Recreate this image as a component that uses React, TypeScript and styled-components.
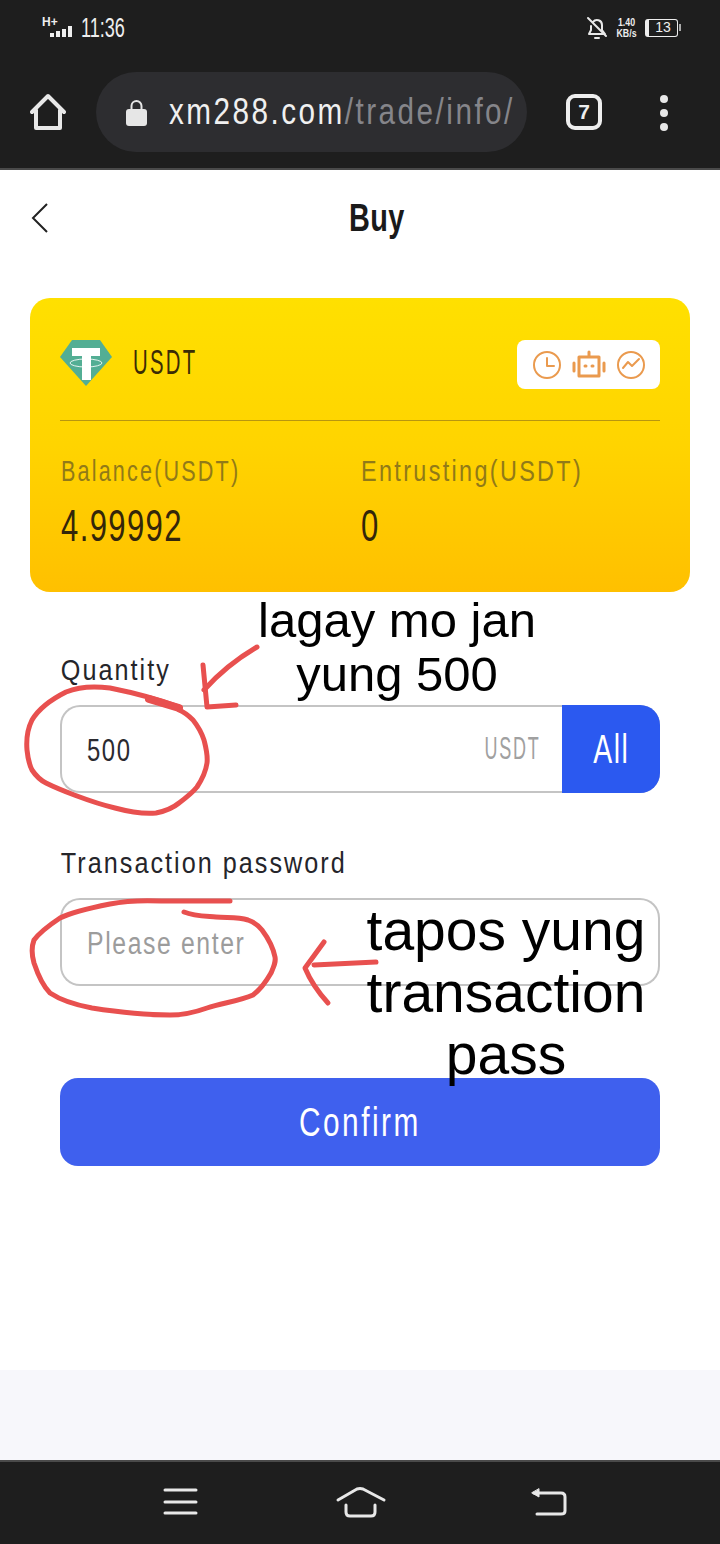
import React from "react";
import styled, { createGlobalStyle, css } from "styled-components";

const Global = createGlobalStyle`
  html, body { margin: 0; padding: 0; background: #fff; }
  #root { width: 720px; height: 1544px; overflow: hidden; }
  * { box-sizing: border-box; }
`;

const squeeze = (x: number, origin = "left") => css`
  display: inline-block;
  white-space: nowrap;
  transform: scaleX(${x});
  transform-origin: ${origin} center;
`;

const Screen = styled.div`
  position: relative;
  width: 720px;
  height: 1544px;
  display: flex;
  flex-direction: column;
  font-family: "Liberation Sans", Arial, sans-serif;
  background: #fff;
  overflow: hidden;
`;
const Chrome = styled.header`
  height: 170px;
  background: #1e1e1e;
  border-bottom: 2px solid #4a4a4a;
  display: flex;
  flex-direction: column;
`;
const StatusBar = styled.div`
  height: 56px;
  padding: 14px 42px 0 41px;
  display: flex;
  justify-content: space-between;
  align-items: flex-start;
`;
const StatusGroup = styled.div`
  display: flex;
  align-items: center;
  gap: 6px;
  height: 28px;
`;
const Clock = styled.span`
  color: #eee;
  font-size: 27px;
  ${squeeze(0.67)}
`;
const Speed = styled.span`
  display: flex;
  flex-direction: column;
  align-items: center;
  color: #eee;
  font-size: 11px;
  line-height: 11px;
  font-weight: 700;
  transform: scaleX(0.8);
`;
const Battery = styled.span`
  width: 33px;
  height: 18px;
  border: 1.5px solid #eee;
  border-left-width: 4px;
  border-radius: 3px;
  color: #eee;
  font-size: 14px;
  line-height: 15px;
  text-align: center;
  position: relative;
  &::after {
    content: "";
    position: absolute;
    right: -4px;
    top: 4px;
    width: 2px;
    height: 7px;
    background: #aaa;
  }
`;
const Toolbar = styled.div`
  height: 112px;
  padding: 16px 0 16px 30px;
  display: flex;
  align-items: flex-start;
`;
const HomeSlot = styled.div`
  width: 36px;
  height: 80px;
  display: flex;
  align-items: center;
`;
const UrlPill = styled.div`
  width: 431px;
  height: 80px;
  margin-left: 30px;
  border-radius: 40px;
  background: #2d2d30;
  display: flex;
  align-items: center;
  padding-left: 30px;
  gap: 22px;
  overflow: hidden;
  & > svg {
    flex-shrink: 0;
  }
`;
const Url = styled.span`
  font-size: 36px;
  letter-spacing: 3px;
  color: #f0f0f0;
  flex-shrink: 0;
  ${squeeze(0.825)}
`;
const UrlPath = styled.span`
  color: #85858a;
`;
const TabCount = styled.div`
  width: 36px;
  height: 36px;
  margin: 22px 0 0 39px;
  border: 4px solid #eee;
  border-radius: 9px;
  color: #eee;
  font: 700 21px/28px "Liberation Sans", sans-serif;
  text-align: center;
`;
const Dots = styled.div`
  margin: 23px 0 0 58px;
  display: flex;
  flex-direction: column;
  gap: 6px;
`;
const Dot = styled.i`
  display: block;
  width: 8px;
  height: 8px;
  border-radius: 50%;
  background: #e8e8e8;
`;
const TitleBar = styled.div`
  height: 128px;
  padding: 32px 0 0 30px;
  display: flex;
  align-items: flex-start;
`;
const Title = styled.h1`
  margin: -6px 0 0 299px;
  font-size: 38px;
  line-height: 44px;
  font-weight: 700;
  color: #1a1a1a;
  letter-spacing: 0.5px;
  ${squeeze(0.76)}
`;
const Card = styled.section`
  margin: 0 30px;
  height: 294px;
  padding: 42px 30px 0;
  border-radius: 20px;
  background: linear-gradient(180deg, #ffe000 0%, #ffd400 50%, #ffc000 100%);
`;
const CardHead = styled.div`
  height: 81px;
  display: flex;
  align-items: flex-start;
  border-bottom: 1px solid #b8960f;
`;
const CoinName = styled.span`
  margin: 2px 0 0 21px;
  font-size: 35px;
  line-height: 40px;
  letter-spacing: 4px;
  color: #3b2c05;
  ${squeeze(0.58)}
`;
const ToolBox = styled.div`
  margin-left: auto;
  width: 143px;
  height: 49px;
  border-radius: 8px;
  background: #fff;
  display: flex;
  align-items: center;
  justify-content: center;
  gap: 10px;
`;
const Stats = styled.div`
  display: grid;
  grid-template-columns: 300px 1fr;
  padding: 33px 0 0 1px;
`;
const Stat = styled.div`
  display: flex;
  flex-direction: column;
  align-items: flex-start;
  gap: 18px;
`;
const StatLabel = styled.span<{ $sx: number }>`
  font-size: 30px;
  line-height: 34px;
  letter-spacing: 3px;
  color: #917a18;
  ${(p) => squeeze(p.$sx)}
`;
const StatValue = styled.span`
  font-size: 45px;
  line-height: 40px;
  letter-spacing: 2px;
  color: #33260a;
  ${squeeze(0.69)}
`;
const Form = styled.form`
  padding: 0 60px;
  display: flex;
  flex-direction: column;
`;
const Label = styled.label<{ $top: number }>`
  align-self: flex-start;
  margin-top: ${(p) => p.$top}px;
  height: 52px;
  font-size: 30px;
  line-height: 34px;
  letter-spacing: 2.4px;
  color: #25252a;
  padding-left: 1px;
  ${squeeze(0.84)}
`;
const Field = styled.div`
  height: 88px;
  box-shadow: inset 0 0 0 2px #c4c4c4;
  border-radius: 20px;
  display: flex;
  align-items: center;
  overflow: hidden;
`;
const FieldText = styled.span<{ $muted?: boolean }>`
  margin: 3px 0 0 27px;
  font-size: 31px;
  letter-spacing: 2px;
  color: ${(p) => (p.$muted ? "#9c9c9c" : "#2a2a30")};
  ${(p) => squeeze(p.$muted ? 0.8 : 0.77)}
`;
const Unit = styled.span`
  margin-left: auto;
  margin-right: 22px;
  font-size: 31px;
  letter-spacing: 3px;
  color: #a0a0a0;
  ${squeeze(0.58, "right")}
`;
const AllButton = styled.span`
  width: 98px;
  height: 88px;
  flex-shrink: 0;
  background: #2b59f0;
  color: #fff;
  display: flex;
  align-items: center;
  justify-content: center;
`;
const AllText = styled.span`
  font-size: 40px;
  letter-spacing: 2px;
  ${squeeze(0.71, "center")}
`;
const Confirm = styled.button`
  margin-top: 92px;
  height: 88px;
  border: 0;
  border-radius: 18px;
  background: #3f60ee;
  color: #fff;
  font-family: inherit;
  padding: 0;
`;
const ConfirmText = styled.span`
  font-size: 40px;
  letter-spacing: 3.4px;
  ${squeeze(0.745, "center")}
`;
const Spacer = styled.div`
  flex: 1;
`;
const PageFoot = styled.div`
  height: 90px;
  background: #f7f7fb;
`;
const NavBar = styled.nav`
  height: 84px;
  background: #1e1e1e;
  border-top: 2px solid #4a4a4a;
`;
const Note = styled.div<{ $x: number; $y: number; $w: number; $size: number; $lh: number }>`
  position: absolute;
  left: ${(p) => p.$x}px;
  top: ${(p) => p.$y}px;
  width: ${(p) => p.$w}px;
  font: 400 ${(p) => p.$size}px/${(p) => p.$lh}px "Liberation Sans", Arial, sans-serif;
  color: #000;
  text-align: center;
`;
const Scribbles = styled.svg`
  position: absolute;
  left: 0;
  top: 0;
  pointer-events: none;
`;

const line = { fill: "none", stroke: "#e8e8e8", strokeLinecap: "round", strokeLinejoin: "round" } as const;
const orange = { fill: "none", stroke: "#ea9a4e", strokeLinecap: "round", strokeLinejoin: "round" } as const;

export default function App() {
  return (
    <Screen>
      <Global />
      <Chrome>
        <StatusBar>
          <StatusGroup>
            <svg width="34" height="28" viewBox="0 0 34 28">
              <text x="1" y="12" fill="#eee" fontFamily="Liberation Sans" fontWeight="700" fontSize="12">H+</text>
              <g fill="#eee">
                <rect x="9" y="19" width="4" height="4" />
                <rect x="15" y="17" width="4" height="6" />
                <rect x="21" y="15" width="4" height="8" />
                <rect x="27" y="12" width="4" height="11" />
              </g>
            </svg>
            <Clock>11:36</Clock>
          </StatusGroup>
          <StatusGroup>
            <svg width="22" height="26" viewBox="0 0 22 26" {...line} strokeWidth="2">
              <path d="M3 19h16l-3-4V10a5 5 0 0 0-9-3M5 11v4l-2 4M2 3l18 18M9 23h4" />
            </svg>
            <Speed>
              <span>1.40</span>
              <span>KB/s</span>
            </Speed>
            <Battery>13</Battery>
          </StatusGroup>
        </StatusBar>
        <Toolbar>
          <HomeSlot>
            <svg width="36" height="38" viewBox="0 0 36 38" {...line} strokeWidth="4">
              <path d="M2 19 18 3l16 16M6 17v18h24V17" />
            </svg>
          </HomeSlot>
          <UrlPill>
            <svg width="21" height="27" viewBox="0 0 21 27">
              <path d="M5.500 12V7a5 5 0 0 1 10 0v5" fill="none" stroke="#e6e6e6" strokeWidth="2" />
              <rect x="0" y="10" width="21" height="17" rx="3" fill="#e6e6e6" />
            </svg>
            <Url>
              xm288.com<UrlPath>/trade/info/</UrlPath>
            </Url>
          </UrlPill>
          <TabCount>7</TabCount>
          <Dots>
            <Dot />
            <Dot />
            <Dot />
          </Dots>
        </Toolbar>
      </Chrome>

      <TitleBar>
        <svg width="20" height="32" viewBox="0 0 20 32" fill="none" stroke="#222" strokeWidth="2">
          <path d="M17 2 3 16l14 14" />
        </svg>
        <Title>Buy</Title>
      </TitleBar>

      <Card>
        <CardHead>
          <svg width="52" height="46" viewBox="0 0 52 46">
            <path d="M12 0h28l12 17-26 29L0 17z" fill="#53ae94" />
            <ellipse cx="26" cy="23" rx="16" ry="4" fill="none" stroke="#fff" strokeWidth="1" opacity="0.85" />
            <path d="M12 8h28v8h-9v24h-9V16h-10z" fill="#fff" />
          </svg>
          <CoinName>USDT</CoinName>
          <ToolBox>
            <svg width="30" height="30" viewBox="0 0 30 30" {...orange} strokeWidth="2">
              <circle cx="15" cy="15" r="13" />
              <path d="M15 8v8h7" />
            </svg>
            <svg width="34" height="30" viewBox="0 0 34 30" {...orange} strokeWidth="3">
              <path d="M17 2v4M7 7h20v19H7zM2 13v8M32 13v8" />
              <path d="M13 16h1M20 16h1" />
            </svg>
            <svg width="30" height="30" viewBox="0 0 30 30" {...orange} strokeWidth="2">
              <circle cx="15" cy="15" r="13" />
              <path d="m7 18 5-6 4 4 7-7" />
            </svg>
          </ToolBox>
        </CardHead>
        <Stats>
          <Stat>
            <StatLabel $sx={0.72}>Balance(USDT)</StatLabel>
            <StatValue>4.99992</StatValue>
          </Stat>
          <Stat>
            <StatLabel $sx={0.78}>Entrusting(USDT)</StatLabel>
            <StatValue>0</StatValue>
          </Stat>
        </Stats>
      </Card>

      <Form>
        <Label $top={61}>Quantity</Label>
        <Field>
          <FieldText>500</FieldText>
          <Unit>USDT</Unit>
          <AllButton>
            <AllText>All</AllText>
          </AllButton>
        </Field>
        <Label $top={53}>Transaction password</Label>
        <Field>
          <FieldText $muted>Please enter</FieldText>
        </Field>
        <Confirm type="button">
          <ConfirmText>Confirm</ConfirmText>
        </Confirm>
      </Form>
      <Spacer />
      <PageFoot />
      <NavBar>
        <svg width="720" height="82" viewBox="0 1462 720 82" {...line} strokeWidth="3">
          <path d="M165 1490h31M165 1502h31M165 1513h31" />
          <path d="m338 1500 19-11q3-1 6 0l21 11M346 1505v7q0 4 4 4h21q4 0 4-4v-7" />
          <path d="M534 1493h27q4 0 4 4v14q0 3-4 3h-24" />
          <path d="M539 1489v8l-7-4z" fill="#e8e8e8" strokeWidth="1" />
        </svg>
      </NavBar>

      <Note $x={207} $y={593} $w={380} $size={49} $lh={54}>
        lagay mo jan
        <br />
        yung 500
      </Note>
      <Note $x={346} $y={899} $w={320} $size={57} $lh={62}>
        tapos yung
        <br />
        transaction
        <br />
        pass
      </Note>
      <Scribbles width="720" height="1544" viewBox="0 0 720 1544" fill="none" stroke="#e8504f" strokeWidth="5" strokeLinecap="round" strokeLinejoin="round">
        <path d="M179 707C160 700 130 692 110 688 95 686 78 687 66 692 50 700 38 710 32 720 27 730 26 738 27 750 28 760 30 766 32 770 36 776 40 780 46 783 58 789 90 802 115 808 130 812 146 814 156 813 166 811 173 808 179 803 187 797 193 792 197 787 203 778 206 770 207 763 208 755 206 748 204 740 201 731 197 725 193 720 188 715 184 712 179 710" />
        <path d="M149 699 179 708" strokeWidth="8" />
        <path d="M257 647C240 657 222 670 204 690" />
        <path d="M203 665 207 707 236 705" />
        <path d="M230 901H161C140 900 125 901 110 904 90 908 72 912 60 918 48 926 40 932 34 940 31 948 32 956 34 963 38 975 42 985 50 993 62 1001 76 1005 92 1008 118 1012 146 1015 170 1015 185 1015 196 1012 207 1008 222 1003 240 1001 253 995 261 989 267 980 271 973 274 966 276 962 275 957 273 947 268 938 262 930 258 925 254 922 248 920 238 917 228 918 216 917 204 916 194 916 184 912" />
        <path d="M376 962 314 965" />
        <path d="M324 942 305 968C310 980 318 992 328 1003" />
      </Scribbles>
    </Screen>
  );
}
